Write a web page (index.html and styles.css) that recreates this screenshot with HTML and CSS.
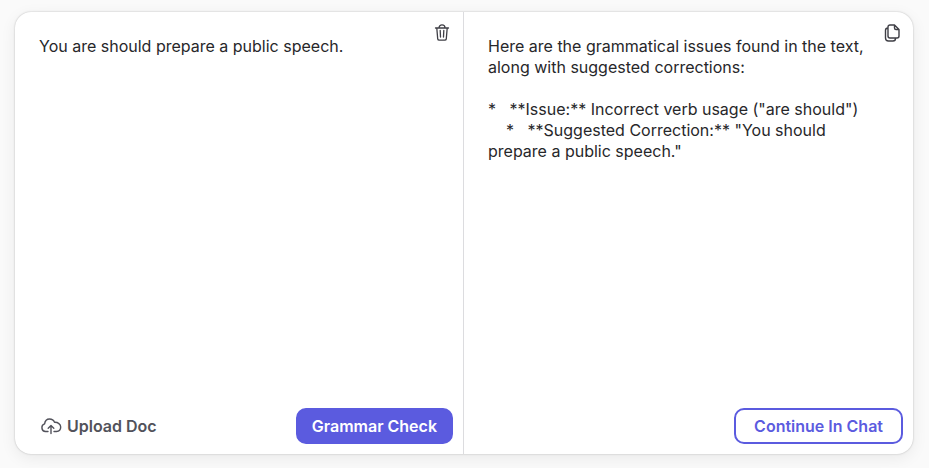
FILE: index.html
```html
<!DOCTYPE html>
<html lang="en">
<head>
    <meta charset="UTF-8">
    <meta name="viewport" content="width=device-width, initial-scale=1.0">
    <title>Grammar Check</title>
    <link rel="stylesheet" href="styles.css">
</head>
<body>
    <main class="checker">
        <section class="panel input-panel">
            <div class="panel-body">
                <textarea class="text" id="source" aria-label="Your text" spellcheck="false">You are should prepare a public speech.</textarea>
                <button type="button" class="icon-btn" id="clear" aria-label="Clear text">
                    <svg width="18" height="18" viewBox="0 0 18 18" fill="none" stroke="currentColor" stroke-width="1.3" stroke-linecap="round" stroke-linejoin="round">
                        <path d="M2.500 4h13M6 3.800a3 3 0 0 1 6 0M3.800 4l.9 10.800a1.600 1.600 0 0 0 1.600 1.400h5.400a1.600 1.600 0 0 0 1.600-1.400L14.200 4M7.200 6.500l.3 6.500M10.800 6.500l-.3 6.500"/>
                    </svg>
                </button>
            </div>
            <div class="actions">
                <button type="button" class="upload">
                    <svg width="22" height="18" viewBox="0 0 22 18" fill="none" stroke="currentColor" stroke-width="1.4" stroke-linecap="round" stroke-linejoin="round">
                        <path d="M8 14.500H5.500a3.900 3.900 0 0 1-.9-7.600C5 4 7 2 9.500 2c2.400 0 4.200 1.200 5 3.300 3.500-.2 6.200 2 6.200 4.800 0 2.600-1.800 4.400-4.200 4.400H14M11 16.500V8.800M8.200 11.200L11 8.500l2.800 2.700"/>
                    </svg>
                    Upload Doc
                </button>
                <button type="button" class="btn primary">Grammar Check</button>
            </div>
        </section>
        <section class="panel">
            <div class="panel-body">
                <div class="text result" id="result">Here are the grammatical issues found in the text, along with suggested corrections:

*   **Issue:** Incorrect verb usage ("are should")
    *   **Suggested Correction:** "You should prepare a public speech."</div>
                <button type="button" class="icon-btn" id="copy" aria-label="Copy result">
                    <svg width="18" height="18" viewBox="0 0 18 18" fill="none" stroke="currentColor" stroke-width="1.4" stroke-linecap="round" stroke-linejoin="round">
                        <path d="M7 1h4.500L16 5.500V12a2 2 0 0 1-2 2H7a2 2 0 0 1-2-2V3a2 2 0 0 1 2-2zM11.500 1v3a1.500 1.500 0 0 0 1.500 1.500h3M5 4a2.500 2.500 0 0 0-2.500 2.500V14a3 3 0 0 0 3 3H10a2.500 2.500 0 0 0 2.500-2.500"/>
                    </svg>
                </button>
            </div>
            <div class="actions">
                <button type="button" class="btn outline">Continue In Chat</button>
            </div>
        </section>
    </main>
    <script>
        const source = document.getElementById('source')
        const result = document.getElementById('result')

        document.getElementById('clear').addEventListener('click', () => {
            source.value = ''
            source.focus()
        })
        document.getElementById('copy').addEventListener('click', () => {
            navigator.clipboard.writeText(result.textContent)
        })
    </script>
</body>
</html>
```
FILE: styles.css
```css
*{
  box-sizing: border-box;
}
body{
  margin: 0;
  padding: 12px 16px 14px 15px;
  min-height: 100vh;
  display: flex;
  background-color: #fafafa;
  color: #27272a;
  font-family: Inter, sans-serif;
  font-size: 16px;
  line-height: 21px;
}
button{
  font: inherit;
  cursor: pointer;
}
.checker{
  flex: 1;
  display: grid;
  grid-template-columns: 1fr 1fr;
  background-color: white;
  border-radius: 16px;
  box-shadow: 0 0 2px rgba(0, 0, 0, 0.25), 0 4px 16px rgba(0, 0, 0, 0.07);
}
.panel{
  display: flex;
  flex-direction: column;
  min-width: 0;
}
.input-panel{
  border-right: 1px solid #dcdcdf;
}
.panel-body{
  flex: 1;
  display: flex;
  align-items: flex-start;
  padding: 0 12px 0 24px;
}
.text{
  flex: 1;
  align-self: stretch;
  min-width: 0;
  margin: 0;
  padding: 24px 0 0;
  border: none;
  outline: none;
  resize: none;
  background: none;
  color: inherit;
  font: inherit;
}
.result{
  white-space: pre-wrap;
}
.icon-btn{
  display: flex;
  margin-top: 12px;
  padding: 0;
  border: none;
  background: none;
  color: #3f3f46;
}
.actions{
  display: flex;
  align-items: center;
  justify-content: flex-end;
  padding: 10px;
}
.upload{
  display: flex;
  align-items: center;
  gap: 5px;
  margin-right: auto;
  padding: 0 15px;
  border: none;
  background: none;
  color: #52525b;
  font-weight: 600;
}
.btn{
  height: 36px;
  padding: 0 16px;
  border: 2px solid #5b5bdf;
  border-radius: 10px;
  font-weight: 600;
}
.primary{
  padding: 0 14px;
  background-color: #5b5bdf;
  color: white;
}
.outline{
  padding: 0 18px;
  background-color: white;
  color: #5b5bdf;
}
```
